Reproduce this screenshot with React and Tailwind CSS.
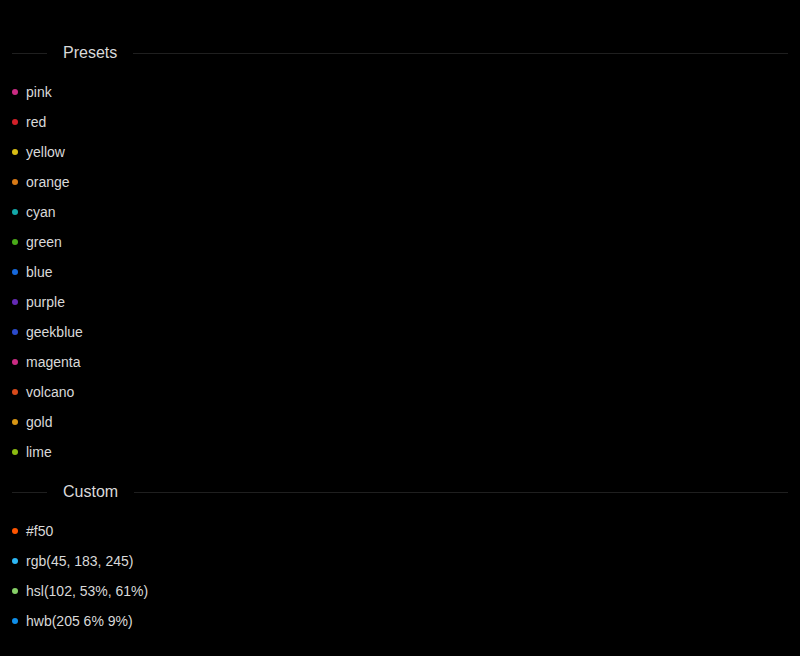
import React from 'react';

const presets = [
  ['pink', '#cb2b83'],
  ['red', '#d32029'],
  ['yellow', '#d8bd14'],
  ['orange', '#d87a16'],
  ['cyan', '#13a8a8'],
  ['green', '#49aa19'],
  ['blue', '#1668dc'],
  ['purple', '#642ab5'],
  ['geekblue', '#2b4acb'],
  ['magenta', '#cb2b83'],
  ['volcano', '#d84a1b'],
  ['gold', '#d89614'],
  ['lime', '#8bbb11'],
];

const custom = ['#f50', 'rgb(45, 183, 245)', 'hsl(102, 53%, 61%)', 'hwb(205 6% 9%)'];

const Divider = ({ children }) => (
  <div className="flex items-center h-6">
    <div className="w-[35px] h-px bg-[#1f1f1f]" />
    <span className="px-4 text-base text-[#d9d9d9]">{children}</span>
    <div className="flex-1 h-px bg-[#1f1f1f]" />
  </div>
);

const Badge = ({ color, text }) => (
  <div className="flex items-center h-[22px] text-sm text-[#d9d9d9]">
    <span className="w-1.5 h-1.5 rounded-full mr-2" style={{ background: color }} />
    <span>{text}</span>
  </div>
);

export default function App() {
  return (
    <div className="min-h-[656px] bg-black px-3 pt-[41px] font-['Liberation_Sans',Arial,sans-serif]">
      <Divider>Presets</Divider>
      <div className="flex flex-col gap-2 mt-4">
        {presets.map(([name, color]) => (
          <Badge key={name} color={color} text={name} />
        ))}
      </div>
      <div className="mt-[17px]">
        <Divider>Custom</Divider>
      </div>
      <div className="flex flex-col gap-2 mt-4">
        {custom.map((c) => (
          <Badge key={c} color={c} text={c} />
        ))}
      </div>
    </div>
  );
}
